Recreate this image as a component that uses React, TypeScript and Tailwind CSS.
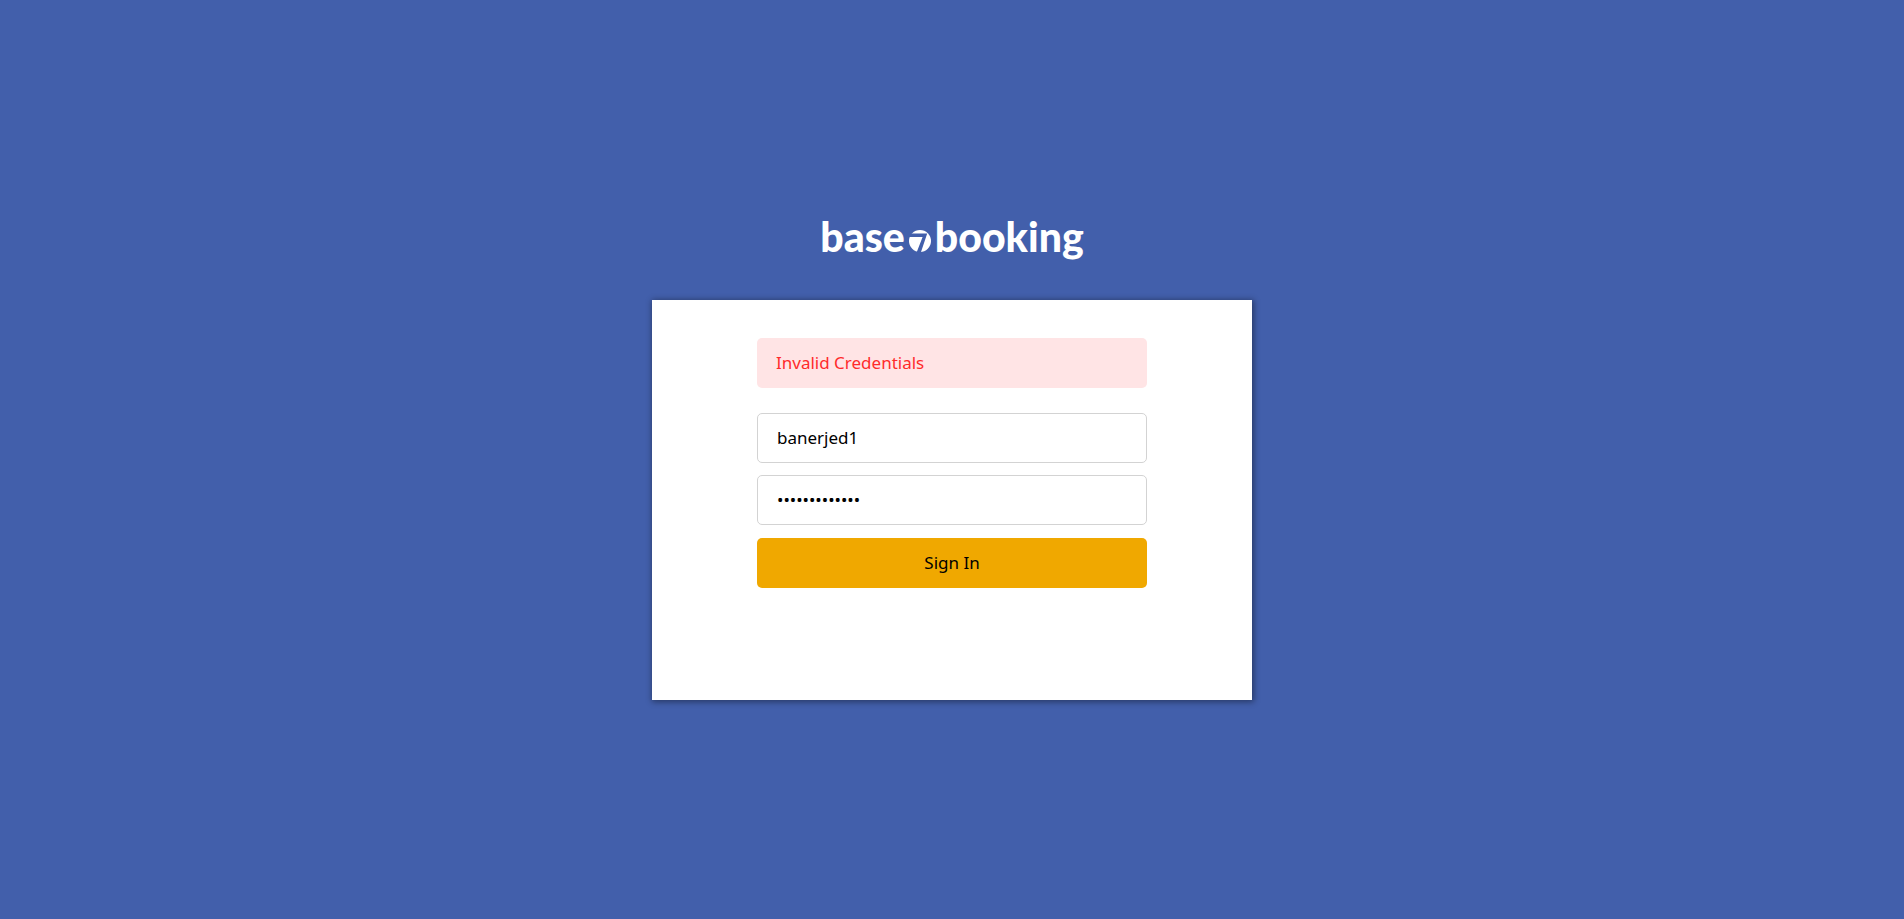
import { useState } from "react";

function Logo() {
  return (
    <h1 className="flex h-11 items-start gap-1 font-['Lato',sans-serif] text-[41px] leading-9 font-black text-white">
      <span>base</span>
      <svg
        className="mt-[11px] h-[22px] w-[22px]"
        viewBox="0 0 22 22"
        role="img"
        aria-label="7"
      >
        <circle cx="11" cy="11" r="11" fill="#fff" />
        <path d="M0 3.6H18.2L12 22H7.8L13.6 7H0Z" fill="#425fab" />
      </svg>
      <span>booking</span>
    </h1>
  );
}

export default function App() {
  const [username, setUsername] = useState("banerjed1");
  const [password, setPassword] = useState("abcdefghijklm");

  return (
    <main className="flex min-h-screen flex-col items-center justify-center gap-[37px] bg-[#425fab] font-['Noto_Sans',sans-serif] text-[17px] text-black">
      <Logo />
      <section className="flex min-h-[400px] w-full max-w-[600px] flex-col items-center bg-white pt-[38px] pb-8 shadow-[1px_1px_6px_1px_rgba(0,0,0,0.4)]">
        <form
          className="flex w-[65%] flex-col"
          onSubmit={(event) => event.preventDefault()}
        >
          <p
            role="alert"
            className="mb-[25px] flex h-[50px] items-center rounded-[5px] bg-[#ffe4e5] px-[19px] text-[#ff2b2b]"
          >
            Invalid Credentials
          </p>
          <input
            type="text"
            aria-label="Username"
            value={username}
            onChange={(event) => setUsername(event.target.value)}
            className="mb-3 h-[50px] rounded-[5px] border border-[#d3d3d3] bg-white px-[19px] pb-0.5 outline-none"
          />
          <input
            type="password"
            aria-label="Password"
            value={password}
            onChange={(event) => setPassword(event.target.value)}
            className="mb-[13px] h-[50px] rounded-[5px] border border-[#d3d3d3] bg-white px-[19px] pb-0.5 outline-none"
          />
          <button
            type="submit"
            className="h-[50px] rounded-[5px] bg-[#f0a800]"
          >
            Sign In
          </button>
        </form>
      </section>
    </main>
  );
}
